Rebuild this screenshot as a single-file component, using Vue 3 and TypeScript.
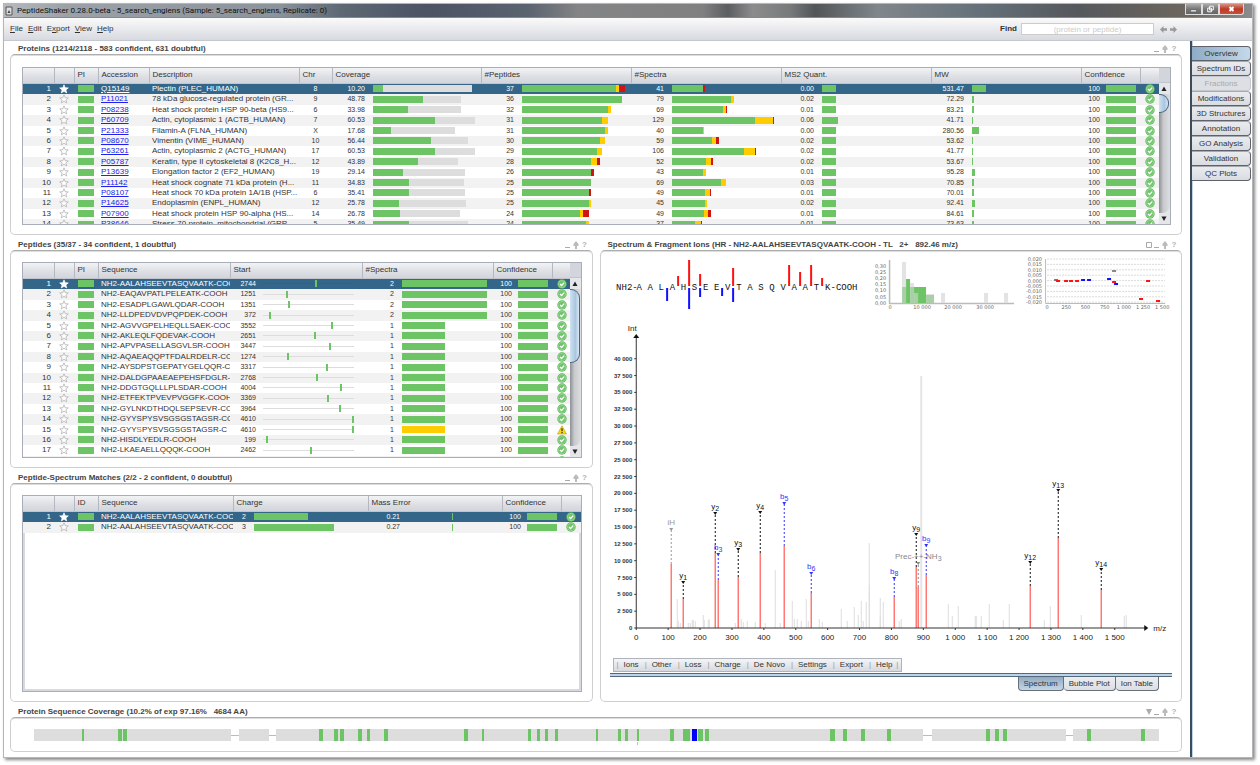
<script setup lang="ts">
import { ref } from 'vue'

type Kind = 'idx' | 'star' | 'pi' | 'link' | 'text' | 'mark' | 'mid' | 'bar' | 'pos' | 'ok' | 'warn'
interface Seg { w: number; c: string }
interface Cell { k: Kind; t?: string; numW?: number; gap?: number; total?: number; segs?: Seg[]; at?: number }
interface Col { w: number; label: string }
interface Grid { id: string; title: string; cols: Col[]; rows: Cell[][]; scroll: boolean }

const col = (w: number, label = ''): Col => ({ w, label })
const bar = (t: string | number, w: number, numW: number, gap: number, parts: number[], colors = ['g', 'y', 'r']): Cell => ({
  k: 'bar', t: String(t), numW, gap, total: w - numW - gap,
  segs: parts.map((p, i) => ({ w: p, c: colors[i] })),
})
const lead = (n: number): Cell[] => [{ k: 'idx', t: String(n) }, { k: 'star' }, { k: 'pi' }]
const PEP = 2.773

type P = [string, string, string, string, number[], number, number[], number, number[], string, number, string, number]
const proteins: P[] = [
  ['Q15149', 'Plectin (PLEC_HUMAN)', '8', '10.20', [10, 89], 37, [34, 1, 2], 41, [31, 0, 2], '0.00', 14, '531.47', 14],
  ['P11021', '78 kDa glucose-regulated protein (GR...', '9', '48.78', [50, 38], 36, [36], 79, [59, 3], '0.02', 14, '72.29', 2],
  ['P08238', 'Heat shock protein HSP 90-beta (HS9...', '6', '33.98', [35, 53], 32, [31, 1], 69, [51, 3, 1], '0.01', 14, '83.21', 2],
  ['P60709', 'Actin, cytoplasmic 1 (ACTB_HUMAN)', '7', '60.53', [62, 40], 31, [29, 2], 129, [83, 18, 1], '0.06', 16, '41.71', 1],
  ['P21333', 'Filamin-A (FLNA_HUMAN)', 'X', '17.68', [18, 64], 31, [30, 1], 40, [31, 1], '0.00', 14, '280.56', 7],
  ['P08670', 'Vimentin (VIME_HUMAN)', '10', '56.44', [58, 37], 30, [28, 2], 59, [40, 4, 3], '0.02', 14, '53.62', 1],
  ['P63261', 'Actin, cytoplasmic 2 (ACTG_HUMAN)', '17', '60.53', [62, 40], 29, [27, 2], 106, [72, 11, 1], '0.02', 14, '41.77', 1],
  ['P05787', 'Keratin, type II cytoskeletal 8 (K2C8_H...', '12', '43.89', [45, 40], 28, [25, 2, 1], 52, [34, 5, 2], '0.02', 14, '53.67', 1],
  ['P13639', 'Elongation factor 2 (EF2_HUMAN)', '19', '29.14', [30, 62], 26, [25, 0, 1], 43, [31, 3], '0.01', 14, '95.28', 3],
  ['P11142', 'Heat shock cognate 71 kDa protein (H...', '11', '34.83', [36, 55], 25, [25], 69, [49, 5], '0.03', 14, '70.85', 2],
  ['P08107', 'Heat shock 70 kDa protein 1A/1B (HSP...', '6', '35.41', [36, 56], 25, [24, 0, 1], 49, [33, 5, 1], '0.01', 14, '70.01', 2],
  ['P14625', 'Endoplasmin (ENPL_HUMAN)', '12', '25.78', [26, 67], 25, [24, 1], 45, [33, 2], '0.02', 14, '92.41', 3],
  ['P07900', 'Heat shock protein HSP 90-alpha (HS...', '14', '26.78', [27, 60], 24, [21, 1, 2], 49, [32, 4, 3], '0.01', 14, '84.61', 2],
  ['P38646', 'Stress-70 protein, mitochondrial (GRP...', '5', '35.49', [36, 59], 24, [23, 1], 37, [23, 6, 1], '0.01', 14, '73.63', 2],
]

const peptides: [string, number, number][] = [
  ['AALAHSEEVTASQVAATK-COOH', 2744, 2], ['EAQAVPATLPELEATK-COOH', 1251, 2], ['ESADPLGAWLQDAR-COOH', 1351, 2],
  ['LLDPEDVDVPQPDEK-COOH', 372, 2], ['AGVVGPELHEQLLSAEK-COOH', 3552, 1], ['AKLEQLFQDEVAK-COOH', 2651, 1],
  ['APVPASELLASGVLSR-COOH', 3447, 1], ['AQAEAQQPTFDALRDELR-COOH', 1274, 1], ['AYSDPSTGEPATYGELQQR-COOH', 3317, 1],
  ['DALDGPAAEAEPEHSFDGLR-COOH', 2768, 1], ['DDGTGQLLLPLSDAR-COOH', 4004, 1], ['ETFEKTPVEVPVGGFK-COOH', 3369, 1],
  ['GYLNKDTHDQLSEPSEVR-CO', 3964, 1], ['GYYSPYSVSGSGSTAGSR-COOH', 4610, 1], ['GYYSPYSVSGSGSTAGSR-C', 4610, 1],
  ['HISDLYEDLR-COOH', 199, 1], ['LKAEAELLQQQK-COOH', 2462, 1], ['LLEAAAQSTK-COOH', 2800, 1],
]

const grids: Grid[] = [
  {
    id: 'proteins', title: 'Proteins (1214/2118 - 583 confident, 631 doubtful)', scroll: true,
    cols: [col(31), col(20), col(24, 'PI'), col(51, 'Accession'), col(150, 'Description'), col(33, 'Chr'), col(149, 'Coverage'),
      col(150, '#Peptides'), col(150, '#Spectra'), col(150, 'MS2 Quant.'), col(150, 'MW'), col(59, 'Confidence'), col(20)],
    rows: proteins.map((p, i) => [
      ...lead(i + 1), { k: 'link', t: p[0] }, { k: 'text', t: p[1] }, { k: 'mid', t: p[2] },
      bar(p[3], 149, 33, 8, p[4], ['g', 'n']),
      bar(p[5], 150, 33, 8, p[6].map(n => n * PEP)),
      bar(p[7], 150, 33, 8, p[8]),
      bar(p[9], 150, 33, 8, [p[10]]),
      bar(p[11], 150, 33, 8, [p[12]]),
      bar(100, 59, 19, 6, [30]), { k: 'ok' },
    ] as Cell[]),
  },
  {
    id: 'peptides', title: 'Peptides (35/37 - 34 confident, 1 doubtful)', scroll: true,
    cols: [col(31), col(20), col(24, 'PI'), col(132, 'Sequence'), col(132, 'Start'), col(131, '#Spectra'), col(59, 'Confidence'), col(19)],
    rows: peptides.map((p, i) => [
      ...lead(i + 1), i === 14 ? { k: 'mark', t: p[0] } : { k: 'text', t: 'NH2-' + p[0] },
      { k: 'pos', t: String(p[1]), numW: 26, gap: 7, at: p[1] / 4684 * 100 },
      bar(p[2], 131, 32, 8, [p[2] === 2 ? 85 : 43], [i === 14 ? 'y' : 'g']),
      bar(100, 59, 19, 6, [30]), { k: i === 14 ? 'warn' : 'ok' },
    ] as Cell[]),
  },
  {
    id: 'psms', title: 'Peptide-Spectrum Matches (2/2 - 2 confident, 0 doubtful)', scroll: false,
    cols: [col(31), col(20), col(24, 'ID'), col(135, 'Sequence'), col(135, 'Charge'), col(134, 'Mass Error'), col(59, 'Confidence'), col(20)],
    rows: [[2, 54, '0.21'], [3, 80, '0.27']].map((p, i) => [
      ...lead(i + 1), { k: 'text', t: 'NH2-AALAHSEEVTASQVAATK-COOH' },
      bar(p[0], 135, 13, 8, [p[1] as number]),
      bar(p[2], 134, 32, 52, [1]),
      bar(100, 59, 19, 6, [30]), { k: 'ok' },
    ] as Cell[]),
  },
]

const menus = ['File', 'Edit', 'Export', 'View', 'Help']
const hot = [0, 0, 1, 0, 0]
const sideTabs = ['Overview', 'Spectrum IDs', 'Fractions', 'Modifications', '3D Structures', 'Annotation', 'GO Analysis', 'Validation', 'QC Plots']
const tools = ['Ions', 'Other', 'Loss', 'Charge', 'De Novo', 'Settings', 'Export', 'Help']
const plotTabs = ['Spectrum', 'Bubble Plot', 'Ion Table']
const find = ref('')

/* Fragment ion overview */
const letters = 'AALAHSEEVTASQVAAT'.split('')
const yIons = [[67, 20], [78, 4], [89, 18], [122, 12], [178, 9], [189, 16], [200, 9], [211, 22]]
const bIons = [[56, 44], [78, 52], [89, 40], [111, 39], [122, 45]]

/* Intensity histogram */
const histY = ['0,30', '0,25', '0,20', '0,15', '0,10', '0,05', '0,00']
const histBars: [number, number, number, number, string][] = [
  [34, 6, 4, 25, '#e3e3e3'], [34, 31, 4, 16, '#a9cfa7'], [38, 23, 4, 24, '#6cc464'], [42, 27, 4, 4, '#e3e3e3'],
  [42, 31, 4, 16, '#a9cfa7'], [46, 31, 4, 6, '#6cc464'], [46, 37, 4, 10, '#a9cfa7'], [50, 31, 8, 16, '#6cc464'],
  [58, 38, 8, 1, '#e3e3e3'], [58, 39, 8, 8, '#a9cfa7'], [73, 37, 4, 10, '#e3e3e3'], [116, 37, 4, 10, '#e3e3e3'], [136, 37, 4, 10, '#e3e3e3'],
]

/* Mass error scatter */
const errY = ['0,020', '0,015', '0,010', '0,005', '0,000', '-0,005', '-0,010', '-0,015', '-0,020']
const errX = ['0', '250', '500', '750', '1 000', '1 250', '1 500']
const points: [number, number, string][] = [
  [32, 24, '#777'], [34, 25, '#f11'], [42, 25, '#f11'], [47, 25, '#f11'], [53, 25, '#f11'], [59, 24, '#11f'], [65, 24, '#11f'],
  [85, 23, '#11f'], [90, 15, '#888'], [90, 26, '#f11'], [92, 28, '#11f'], [117, 43, '#f11'], [124, 25, '#f11'], [134, 45, '#f11'],
]

/* Spectrum, in plot coordinates: baseline y=308, origin x=28 */
const BASE = 308
const fmt = (n: number) => String(n).replace(/\B(?=(\d{3})+$)/g, ' ')
const yTicks = Array.from({ length: 17 }, (_, i) => ({ y: BASE - i * 16.83, t: fmt(i * 2500) }))
const xTicks = Array.from({ length: 16 }, (_, i) => ({ x: 28 + i * 31.9, t: fmt(i * 100) }))
interface Peak { x: number; top: number; m: number; a: string; s: string; c: string }
const pk = (x: number, top: number, m: number, a: string, s: string, c = '#111'): Peak => ({ x, top, m, a, s, c })
const peaks: Peak[] = [
  pk(63, 244, 209, 'iH', '', '#999'), pk(75, 279, 262, 'y', '1'), pk(107, 233, 193, 'y', '2'), pk(110, 260, 234, 'b', '3', '#33f'),
  pk(130, 257, 229, 'y', '3'), pk(152, 233, 192, 'y', '4'), pk(176, 226, 183, 'b', '5', '#33f'), pk(203, 273, 253, 'b', '6', '#33f'),
  pk(286, 277, 258, 'b', '8', '#33f'), pk(308, 247, 214, 'y', '9'), pk(310, 267, 243, 'Prec-++-NH', '3', '#888'),
  pk(318, 255, 225, 'b', '9', '#33f'), pk(422, 266, 242, 'y', '12'), pk(450, 218, 170, 'y', '13'), pk(493, 270, 249, 'y', '14'),
]
const noise: [number, number][] = [
  [69, 29], [95, 13], [167, 58], [184, 27], [198, 29], [233, 19], [246, 21], [253, 27], [258, 26], [261, 85], [272, 30], [275, 26],
  [63, 4], [70, 7], [72, 5], [80, 5], [82, 5], [84, 8], [85, 8], [87, 7], [96, 8], [100, 8], [101, 9], [127, 5], [133, 9], [135, 6],
  [139, 7], [147, 6], [157, 5], [172, 5], [186, 9], [189, 9], [193, 7], [200, 7], [211, 9], [214, 6], [239, 7], [250, 13], [255, 7],
  [272, 11], [291, 7], [293, 9], [340, 24], [344, 12], [350, 22], [367, 12], [368, 12], [373, 12], [381, 24], [395, 8], [401, 24],
  [436, 8], [442, 22], [473, 13], [516, 12], [518, 13], [261, 43],
]

/* Sequence coverage, measured from the track's left edge; full length 1125 */
const LEN = 1125
const blocks = [[0, 197], [205, 30], [242, 647], [898, 134], [1039, 86]]
const hits: [number, number][] = [
  [48, 2], [84, 4], [89, 4], [285, 4], [300, 4], [306, 4], [324, 4], [333, 3], [350, 4], [430, 4], [448, 2], [494, 3], [503, 3], [511, 3],
  [521, 3], [562, 2], [584, 3], [591, 3], [603, 2], [636, 4], [649, 4], [653, 3], [664, 5], [671, 4], [796, 5], [809, 4], [827, 4],
  [853, 4], [952, 4], [961, 4], [969, 4], [1053, 4], [1107, 4],
]
const pct = (n: number, of: number) => `${n / of * 100}%`
</script>

<template>
  <div class="window">
    <header class="titlebar">
      <svg class="appicon" viewBox="0 0 8 10" aria-hidden="true"><path d="M1 1h6v8H1z" fill="#ddd" stroke="#555" /><path d="M4 4l1.5 3h-3z" fill="#444" /></svg>
      <h1>PeptideShaker 0.28.0-beta - 5_search_engiens (Sample: 5_search_engiens, Replicate: 0)</h1>
      <div class="winbtns">
        <button aria-label="Minimize"><svg viewBox="0 0 16 10"><path d="M5 6h6v2H5z" fill="#fff" stroke="#444" stroke-width=".5" /></svg></button>
        <button aria-label="Restore"><svg viewBox="0 0 16 10"><path d="M7 2h4v4H7zM5 4h4v4H5z" fill="#777" stroke="#fff" /></svg></button>
        <button class="close" aria-label="Close"><svg viewBox="0 0 16 10"><path d="M6 3l4 4M10 3l-4 4" stroke="#fff" stroke-width="2" /></svg></button>
      </div>
    </header>

    <div class="menubar">
      <nav>
        <button v-for="(m, i) in menus" :key="m">{{ m.slice(0, hot[i]) }}<u>{{ m[hot[i]] }}</u>{{ m.slice(hot[i] + 1) }}</button>
      </nav>
      <label for="find">Find</label>
      <input id="find" v-model="find" placeholder="(protein or peptide)">
      <button class="arrow" aria-label="Previous"><svg viewBox="0 0 8 8"><path d="M0 4l4-4v2.500h4v3H4V8z" fill="#999" /></svg></button>
      <button class="arrow" aria-label="Next"><svg viewBox="0 0 8 8"><path d="M8 4L4 0v2.500H0v3h4V8z" fill="#999" /></svg></button>
    </div>

    <div class="body">
      <main>
        <section v-for="g in grids" :key="g.id" :class="['panel', g.id]">
          <div class="cap">
            <h2>{{ g.title }}</h2>
            <button class="ic" aria-label="Hide"><svg viewBox="0 0 6 8"><path d="M0 6h5v1H0z" fill="#aaa" /></svg></button>
            <button class="ic" aria-label="Export"><svg viewBox="0 0 6 8"><path d="M3 0l2.500 3v2H4v3H2V5H.5V3z" fill="#bbb" /></svg></button>
            <button class="ic" aria-label="Help">?</button>
          </div>
          <div class="box">
            <div class="frame">
              <div class="view">
                <table>
                  <colgroup><col v-for="(c, i) in g.cols" :key="i" :style="{ width: c.w + 'px' }"></colgroup>
                  <thead><tr><th v-for="(c, i) in g.cols" :key="i">{{ c.label }}</th></tr></thead>
                  <tbody>
                    <tr v-for="(r, ri) in g.rows" :key="ri" :class="{ sel: ri === 0 }">
                      <td v-for="(c, ci) in r" :key="ci" :class="c.k">
                        <svg v-if="c.k === 'star'" viewBox="0 0 10 10" class="icon">
                          <path d="M5 .8l1.2 2.9 3.1.2-2.4 2 .8 3L5 7.3 2.3 8.9l.8-3-2.4-2 3.1-.2z" :fill="ri === 0 ? '#fff' : '#fdfdfd'" :stroke="ri === 0 ? '#fff' : '#aaa'" stroke-width=".7" />
                        </svg>
                        <i v-else-if="c.k === 'pi'" class="chip" />
                        <a v-else-if="c.k === 'link'" :href="'#' + c.t">{{ c.t }}</a>
                        <div v-else-if="c.k === 'bar'" class="barcell">
                          <span class="num" :style="{ width: c.numW + 'px', marginRight: c.gap + 'px' }">{{ c.t }}</span>
                          <span class="track"><i v-for="(s, si) in c.segs" :key="si" :class="s.c" :style="{ width: pct(s.w, c.total!) }" /></span>
                        </div>
                        <div v-else-if="c.k === 'pos'" class="barcell">
                          <span class="num" :style="{ width: c.numW + 'px', marginRight: c.gap + 'px' }">{{ c.t }}</span>
                          <span class="line"><i :style="{ left: c.at + '%' }" /></span>
                        </div>
                        <svg v-else-if="c.k === 'ok'" viewBox="0 0 10 10" class="icon">
                          <circle cx="5" cy="5" r="4.700" fill="#5cb85a" /><circle cx="5" cy="5" r="3.700" fill="#6fc46a" stroke="#b7e2b3" stroke-width=".5" />
                          <path d="M3 5l1.600 1.500L7.200 3.600" fill="none" stroke="#fff" stroke-width="1.300" />
                        </svg>
                        <svg v-else-if="c.k === 'warn'" viewBox="0 0 10 10" class="icon">
                          <path d="M5 .8L9.500 9H.5z" fill="#fd0" stroke="#b90" stroke-width=".6" /><path d="M5 3.300v3M5 7v1.200" stroke="#222" stroke-width="1.200" />
                        </svg>
                        <template v-else-if="c.k === 'mark'">NH2-GYY<b>S</b>{{ c.t!.slice(4) }}</template>
                        <template v-else>{{ c.t }}</template>
                      </td>
                    </tr>
                  </tbody>
                </table>
              </div>
              <div v-if="g.scroll" class="scroll">
                <div class="corner" />
                <button aria-label="Scroll up"><svg viewBox="0 0 10 10"><path d="M5 3l2.500 4.500h-5z" fill="#222" /></svg></button>
                <div class="rail"><div class="thumb" /></div>
                <button aria-label="Scroll down"><svg viewBox="0 0 10 10"><path d="M5 7.500L2.500 3h5z" fill="#222" /></svg></button>
              </div>
            </div>
          </div>
        </section>

        <section class="panel spectrum">
          <div class="cap">
            <h2>Spectrum &amp; Fragment Ions (HR - NH2-AALAHSEEVTASQVAATK-COOH - TL &nbsp; 2+ &nbsp; 892.46 m/z)</h2>
            <button class="ic" aria-label="Maximize"><svg viewBox="0 0 6 8"><path d="M.5 1.500h5v5h-5z" fill="none" stroke="#aaa" /></svg></button>
            <button class="ic" aria-label="Hide"><svg viewBox="0 0 6 8"><path d="M0 6h5v1H0z" fill="#aaa" /></svg></button>
            <button class="ic" aria-label="Export"><svg viewBox="0 0 6 8"><path d="M3 0l2.500 3v2H4v3H2V5H.5V3z" fill="#bbb" /></svg></button>
            <button class="ic" aria-label="Help">?</button>
          </div>
          <div class="box plots">
            <div class="minis">
              <svg class="seq" viewBox="0 0 258 60">
                <text x="6" y="34">NH2-</text>
                <text v-for="(l, i) in letters" :key="i" :x="29 + i * 11.08" y="34" text-anchor="middle">{{ l }}</text>
                <text x="215" y="34">K-COOH</text>
                <g stroke-width="2">
                  <path v-for="p in yIons" :key="'y' + p[0]" :d="`M${p[0] + 1} ${p[1]}V30`" stroke="#f11" />
                  <path v-for="p in bIons" :key="'b' + p[0]" :d="`M${p[0] + 1} 32V${p[1] + 1}`" stroke="#11f" />
                </g>
              </svg>
              <svg class="hist" viewBox="0 0 155 60">
                <text v-for="(t, i) in histY" :key="t" x="18" :y="12 + i * 6.1" text-anchor="end">{{ t }}</text>
                <path d="M21.500 4V47.500H146" fill="none" stroke="#bbb" stroke-width="1.500" />
                <rect v-for="(b, i) in histBars" :key="i" :x="b[0]" :y="b[1]" :width="b[2]" :height="b[3]" :fill="b[4]" />
                <text x="22" y="53" text-anchor="middle">0</text><text x="54" y="53" text-anchor="middle">10 000</text>
                <text x="85" y="53" text-anchor="middle">20 000</text><text x="117" y="53" text-anchor="middle">30 000</text>
              </svg>
              <svg class="err" viewBox="0 0 149 60">
                <g v-for="(t, i) in errY" :key="t">
                  <text x="19" :y="5 + i * 5.4" text-anchor="end">{{ t }}</text>
                  <path :d="`M24 ${3 + i * 5.4}h118`" stroke="#ccc" stroke-width=".7" stroke-dasharray="2 1" />
                </g>
                <path d="M22.500 3V47.500H142" fill="none" stroke="#bbb" />
                <text v-for="(t, i) in errX" :key="'x' + t" :x="24 + i * 19.2" y="53" text-anchor="middle">{{ t }}</text>
                <rect v-for="(p, i) in points" :key="'p' + i" :x="p[0] - 1" :y="p[1] - 1" width="4" height="2" :fill="p[2]" />
              </svg>
            </div>
            <svg class="plot" viewBox="3 -4 560 334">
              <path v-for="(n, i) in noise" :key="'n' + i" :d="`M${n[0]} ${BASE}v${-n[1]}`" stroke="#ddd" />
              <path :d="`M313 ${BASE}V56`" stroke="#e4e4e4" stroke-width="2" />
              <g v-for="(p, i) in peaks" :key="'k' + i">
                <path :d="`M${p.x} ${BASE}V${p.top}`" stroke="#ff7a75" stroke-width="1.500" />
                <path :d="`M${p.x} ${p.top}V${p.m}`" :stroke="p.c" stroke-dasharray="2 2" />
                <path :d="`M${p.x - 2} ${p.m - 1}h4l-2 3z`" :fill="p.c" />
                <text class="ion" :x="p.x" :y="p.m - 4" text-anchor="middle" :fill="p.c">{{ p.a }}<tspan class="sub" dy="2">{{ p.s }}</tspan></text>
              </g>
              <path :d="`M28 18V${BASE}H538`" fill="none" stroke="#333" />
              <path d="M28 14l3 4h-6z" fill="#111" /><path :d="`M540 ${BASE}l-4-3v6z`" fill="#111" />
              <text class="ax" x="24" y="11" text-anchor="middle">Int</text><text class="ax" x="545" :y="BASE + 3">m/z</text>
              <g v-for="t in yTicks" :key="'yt' + t.t"><path :d="`M26 ${t.y}h2`" stroke="#333" /><text class="ty" x="24" :y="t.y + 2" text-anchor="end">{{ t.t }}</text></g>
              <g v-for="t in xTicks" :key="'xt' + t.t"><path :d="`M${t.x} ${BASE}v2`" stroke="#333" /><text class="tx" :x="t.x" :y="BASE + 12" text-anchor="middle">{{ t.t }}</text></g>
            </svg>
            <div class="tools"><button v-for="t in tools" :key="t">{{ t }}</button></div>
            <div class="rule" />
            <div class="ptabs"><button v-for="(t, i) in plotTabs" :key="t" :class="{ on: i === 0 }">{{ t }}</button></div>
          </div>
        </section>

        <section class="panel coverage">
          <div class="cap">
            <h2>Protein Sequence Coverage (10.2% of exp 97.16% &nbsp; 4684 AA)</h2>
            <button class="ic" aria-label="Options"><svg viewBox="0 0 6 8"><path d="M0 1h6L3 7z" fill="#aaa" /></svg></button>
            <button class="ic" aria-label="Hide"><svg viewBox="0 0 6 8"><path d="M0 6h5v1H0z" fill="#aaa" /></svg></button>
            <button class="ic" aria-label="Export"><svg viewBox="0 0 6 8"><path d="M3 0l2.500 3v2H4v3H2V5H.5V3z" fill="#bbb" /></svg></button>
            <button class="ic" aria-label="Help">?</button>
          </div>
          <div class="box">
            <svg class="cov" viewBox="0 0 1125 16" preserveAspectRatio="none">
              <path :d="`M0 6.500H${LEN}`" stroke="#bbb" />
              <rect v-for="b in blocks" :key="b[0]" :x="b[0]" y="0" :width="b[1]" height="12" fill="#ddd" />
              <rect v-for="h in hits" :key="h[0]" :x="h[0]" y="0" :width="h[1]" height="12" fill="#6cc464" />
              <rect x="658" y="0" width="5" height="12" fill="#00f" />
              <path d="M603.500 13v3" stroke="#bbf" />
            </svg>
          </div>
        </section>
      </main>
      <aside>
        <button v-for="(t, i) in sideTabs" :key="t" :class="{ on: i === 0 }" :disabled="t === 'Fractions'">{{ t }}</button>
      </aside>
    </div>
  </div>
</template>

<style>
body { margin: 0; background: #fff; }
</style>

<style scoped>
* { box-sizing: border-box; }
.window { margin: 3px 7px 7px 3px; border: 1px solid #b4b6b9; background: #fff; box-shadow: 2px 2px 3px #888; font: 8px/10px "Liberation Sans", Arial, sans-serif; color: #333; }
button { font: inherit; color: inherit; border: 0; padding: 0; margin: 0; background: none; }
svg { display: block; }
h1, h2 { margin: 0; font-size: 8px; line-height: 10px; }
.titlebar { display: flex; height: 14px; padding-left: 1px; align-items: center; border-bottom: 1px solid #85888c; background: linear-gradient(90deg, #b5b9bd 0, #9ba1a7 5%, #8b939b 22%, #5d6874 27%, #4c5364 34%, #5a6370 42%, #838485 46%, #808080 56%, #5b5d60 58%, #8c8c8c 60%, #77797b 63%, #515558 65%, #80868b 70%, #65717a 78%, #55585c 86%, #6d665e 95%, #8a8c8f); }
.appicon { width: 8px; height: 10px; }
.titlebar h1 { flex: 1; padding-left: 4px; font: 8px/12px Roboto, sans-serif; color: #111; }
.winbtns { display: flex; align-self: flex-start; margin-right: 8px; height: 11px; }
.winbtns button { width: 17px; border: 1px solid #ddd; border-top: 0; background: linear-gradient(#aaa, #777 50%, #666); }
.winbtns .close { width: 25px; background: linear-gradient(#d98f80, #bb3a26 50%, #cc5038); border-radius: 0 0 3px; }
.winbtns svg { height: 10px; width: 100%; }
.menubar { display: flex; align-items: center; height: 23px; padding: 0 72px 0 6px; border-bottom: 1px solid #c4c8ce; background: linear-gradient(#fafafa, #e9eaed 50%, #d6d9df); }
.menubar nav { flex: 1; display: flex; gap: 5px; }
.menubar label { font-weight: bold; margin-right: 4px; }
.menubar input { width: 133px; height: 12px; margin-right: 6px; padding: 0; border: 1px solid #ccc; text-align: center; font: inherit; background: #fff; }
.menubar input::placeholder { color: #ccc; opacity: 1; }
.arrow { width: 8px; margin-right: 2px; }
.arrow svg { width: 7px; height: 7px; }
.body { display: flex; }
main { flex: 1; min-width: 0; display: grid; grid-template-columns: minmax(0, 1fr) minmax(0, 1fr); grid-template-areas: "a a" "b d" "c d" "e e"; gap: 5px 7px; padding: 3px 8px 5px 6px; }
.proteins { grid-area: a; }
.peptides { grid-area: b; }
.psms { grid-area: c; }
.spectrum { grid-area: d; }
.coverage { grid-area: e; }
.panel { display: flex; flex-direction: column; min-width: 0; }
.cap { display: flex; height: 10px; padding: 0 4px 0 8px; color: #444; }
.cap h2 { flex: 1; white-space: nowrap; }
.ic { width: 8px; height: 9px; font-weight: bold; color: #b2b2b2; }
.ic svg { width: 6px; height: 8px; }
.box { flex: 1; border: 1px solid #cfcfcf; border-top: 1px solid #aeaeae; border-radius: 5px; padding: 11px 10px 9px 11px; box-shadow: inset 0 1px 0 #ddd; }
.proteins .box { padding-top: 12px; }
.frame { display: flex; border: 1px solid #a8adb9; overflow: hidden; }
.proteins .frame { height: 158px; }
.peptides .frame { height: 196px; }
.psms .frame { height: 197px; box-shadow: inset 0 0 0 2px #d6d9df; }
.view { flex: 1; min-width: 0; overflow: hidden; }
table { width: 100%; table-layout: fixed; border-collapse: collapse; }
th { height: 15px; padding: 0 0 0 3px; text-align: left; font-weight: normal; border-right: 1px solid #b4b8c0; border-bottom: 1px solid #c0c4cc; background: linear-gradient(#f2f3f5, #dcdee3 60%, #d2d5db); white-space: nowrap; }
td { height: 10px; padding: 0; line-height: 10px; white-space: nowrap; overflow: hidden; vertical-align: middle; }
tbody tr:nth-child(5n+2) td, tbody tr:nth-child(5n+4) td { height: 11px; }
tbody tr:nth-child(even) { background: #f2f2f2; }
tbody tr.sel { background: #336689; color: #fff; }
.idx { text-align: right; padding-right: 3px; }
.link, .text, .mark { padding-left: 3px; }
.mid { text-align: center; font-size: 7px; }
.mark b { color: #f33; font-weight: normal; }
a { color: #22e; }
.sel a { color: #fff; }
.icon { width: 10px; height: 10px; margin: 0 auto; }
.chip { display: block; width: 16px; height: 7px; margin: 0 auto; background: #6cc464; }
.barcell { display: flex; align-items: center; height: 10px; font-size: 7px; }
.num { flex: none; text-align: right; }
.track { flex: 1; display: flex; height: 7px; }
.track i { flex: none; }
.g { background: #6cc464; }
.y { background: #fc0; }
.r { background: #d01414; }
.n { background: #ddd; }
.line { flex: 1; position: relative; height: 7px; margin-right: 8px; background: linear-gradient(#ddd, #ddd) 0 3px / 100% 1px no-repeat; }
.line i { position: absolute; top: 0; width: 2px; height: 7px; margin-left: -1px; background: #6cc464; }
.sel .line { background-image: linear-gradient(#3f5f78, #3f5f78); }
.scroll { width: 11px; display: flex; flex-direction: column; background: #e4e6ea; }
.corner { height: 15px; background: #d2d5dc; border-bottom: 1px solid #c0c4cc; }
.scroll button svg { width: 10px; height: 11px; }
.rail { flex: 1; background: linear-gradient(90deg, #8d9094, #c8cacd 40%, #dcdee0); border-radius: 0 0 8px 0; overflow: hidden; }
.thumb { width: 10px; height: 19px; border: 1px solid #4b6580; border-left: 0; border-radius: 0 9px 9px 0; background: linear-gradient(90deg, #cfe2f2, #a9c6de 60%, #d8e8f5); }
.peptides .thumb { height: 74px; }
.plots { display: flex; flex-direction: column; padding: 5px 9px 10px; }
.minis { display: flex; height: 60px; }
.minis svg { min-width: 0; height: 60px; }
.seq { flex: 258 1 0; }
.hist { flex: 155 1 0; }
.err { flex: 149 1 0; }
.seq text { font: 9px "Liberation Mono", monospace; fill: #111; }
.hist text, .err text { font: 5px "DejaVu Sans", sans-serif; fill: #666; }
.plot { width: 100%; height: 334px; }
.ion { font-size: 8px; }
.sub { font-size: 7px; }
.ax, .tx { font-size: 8px; fill: #222; }
.ty { font-size: 6px; font-weight: bold; fill: #333; }
.tools { align-self: flex-start; display: flex; height: 14px; margin: 8px 0 1px 3px; padding: 0 3px; border: 1px solid #aeb3bc; background: linear-gradient(#f4f5f7, #d6d9df); }
.tools button { padding: 0 6px 0 7px; position: relative; white-space: nowrap; }
.tools button::before, .tools button:last-child::after { content: "|"; position: absolute; left: 0; color: #999; }
.tools button:last-child::after { left: auto; right: 0; }
.rule { height: 4px; border: solid #55697c; border-width: 1px 0; background: #bcd3e8; }
.ptabs { display: flex; justify-content: flex-end; padding-right: 13px; }
.ptabs button { height: 14px; padding: 0 5px; border: 1px solid #6a6f78; border-top: 0; border-left-width: 0; border-radius: 0 0 4px 4px; background: linear-gradient(#eceef1, #dcdfe4); white-space: nowrap; }
.ptabs .on { border-left-width: 1px; background: linear-gradient(#93abc0, #c3d7e8); }
.coverage .box { padding: 11px 22px 6px 23px; }
.cov { width: 100%; height: 16px; }
aside { width: 62px; display: flex; flex-direction: column; padding-top: 5px; border-left: 2px solid #3e4b5a; box-shadow: inset 1px 0 0 #bcd3e8; }
aside button { height: 15px; width: 59px; border: 1px solid #5d626b; border-top-color: #a5a9b0; border-left: 0; border-radius: 0 4px 4px 0; background: linear-gradient(#eaebee, #d9dce1); white-space: nowrap; }
aside .on { background: linear-gradient(90deg, #8fabc6, #c4d9ea); border-top-color: #5d626b; }
aside button:disabled { color: #aaa; border-color: #c4c7cc; background: #dcdfe4; }
</style>
